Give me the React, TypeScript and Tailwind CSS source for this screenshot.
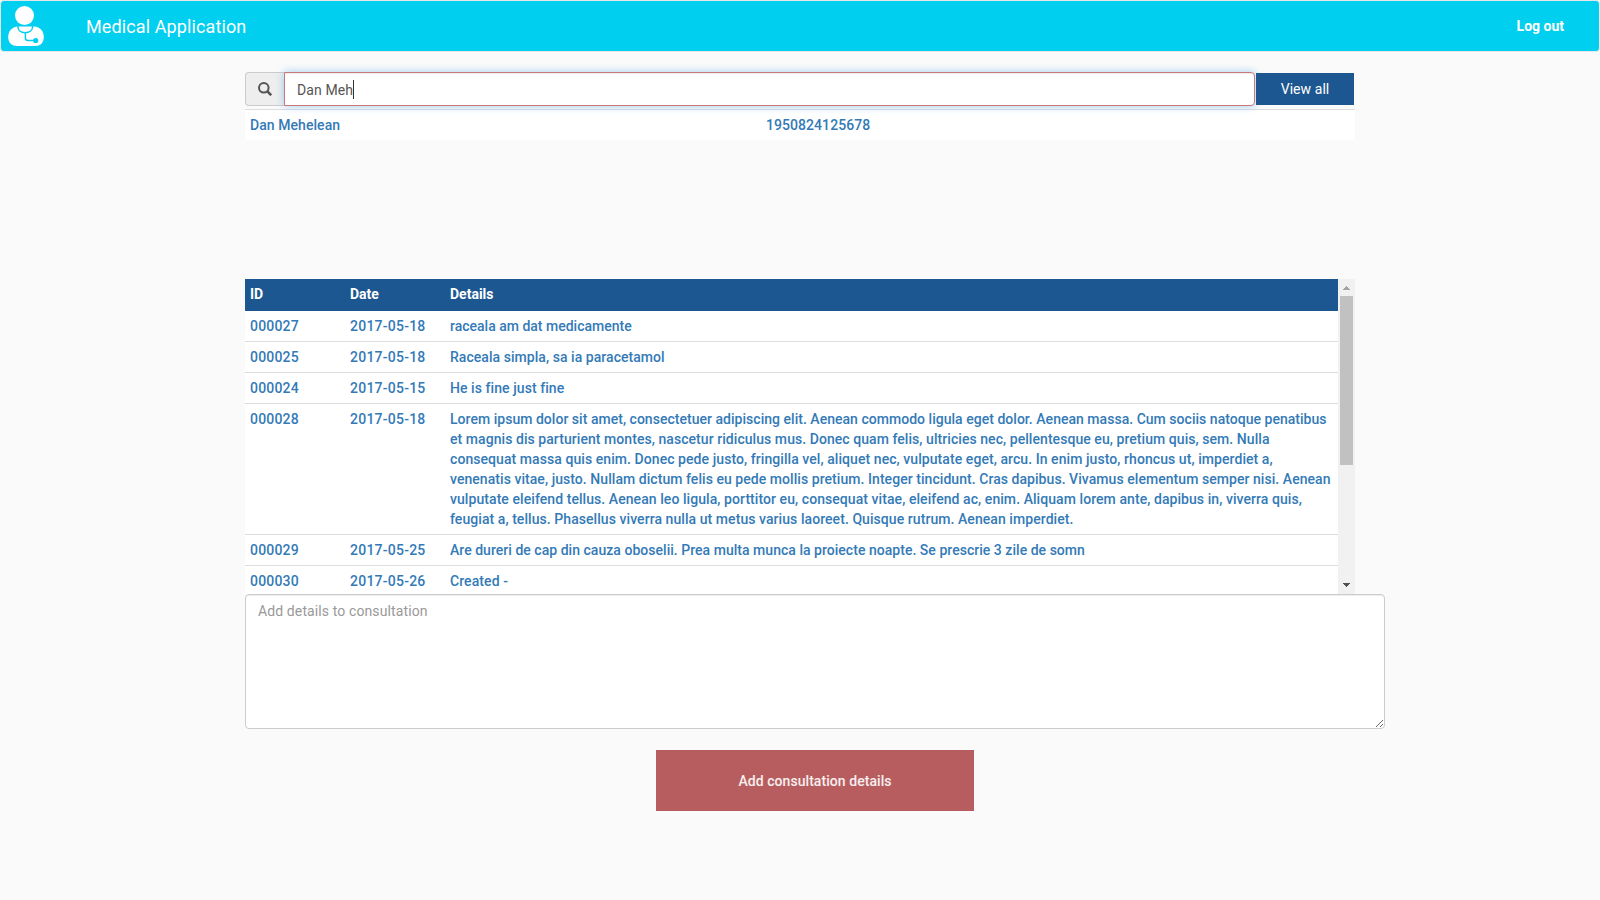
const consultations = [
  { id: "000027", date: "2017-05-18", details: [{ text: "raceala am dat medicamente", tracking: "tracking-normal" }] },
  { id: "000025", date: "2017-05-18", details: [{ text: "Raceala simpla, sa ia paracetamol", tracking: "tracking-[0.05px]" }] },
  { id: "000024", date: "2017-05-15", details: [{ text: "He is fine just fine", tracking: "tracking-[0.07px]" }] },
  {
    id: "000028",
    date: "2017-05-18",
    details: [
      { text: "Lorem ipsum dolor sit amet, consectetuer adipiscing elit. Aenean commodo ligula eget dolor. Aenean massa. Cum sociis natoque penatibus", tracking: "tracking-[0.027px]" },
      { text: "et magnis dis parturient montes, nascetur ridiculus mus. Donec quam felis, ultricies nec, pellentesque eu, pretium quis, sem. Nulla", tracking: "tracking-[0.058px]" },
      { text: "consequat massa quis enim. Donec pede justo, fringilla vel, aliquet nec, vulputate eget, arcu. In enim justo, rhoncus ut, imperdiet a,", tracking: "tracking-[0.068px]" },
      { text: "venenatis vitae, justo. Nullam dictum felis eu pede mollis pretium. Integer tincidunt. Cras dapibus. Vivamus elementum semper nisi. Aenean", tracking: "tracking-[0.053px]" },
      { text: "vulputate eleifend tellus. Aenean leo ligula, porttitor eu, consequat vitae, eleifend ac, enim. Aliquam lorem ante, dapibus in, viverra quis,", tracking: "tracking-[0.067px]" },
      { text: "feugiat a, tellus. Phasellus viverra nulla ut metus varius laoreet. Quisque rutrum. Aenean imperdiet.", tracking: "tracking-[0.065px]" },
    ],
  },
  {
    id: "000029",
    date: "2017-05-25",
    details: [{ text: "Are dureri de cap din cauza oboselii. Prea multa munca la proiecte noapte. Se prescrie 3 zile de somn", tracking: "tracking-[0.03px]" }],
  },
  { id: "000030", date: "2017-05-26", details: [{ text: "Created -", tracking: "tracking-[0.08px]" }] },
];

function DoctorIcon() {
  return (
    <svg className="ml-[7px] h-10 w-9" viewBox="0 0 36 40" fill="none">
      <circle cx="16.5" cy="9.5" r="9.5" fill="#fff" />
      <path d="M9 20.500C3.500 21.200.2 25.500.2 31 .2 37 4 40 9 40h18c5.500 0 8.800-3.300 8.800-9 0-5.500-3.300-9.800-8.800-10.500z" fill="#fff" />
      <path d="M9.800 20c0 4.200 3 6.700 7.300 6.700s7.600-2.500 7.600-6.700M17.400 26.700v5.300q0 2.500 2.600 2.500h6" stroke="#00cfef" strokeWidth="1.500" />
      <circle cx="27.700" cy="34.500" r="2.600" fill="#00cfef" />
    </svg>
  );
}

function Scrollbar() {
  return (
    <div className="flex w-[17px] shrink-0 flex-col items-center bg-[#f1f1f1]">
      <svg className="h-[17px] w-[17px] shrink-0" viewBox="0 0 17 17" shapeRendering="crispEdges">
        <path d="M8 7h1v1h1v1h1v1h1v1H5v-1h1V9h1V8h1z" fill="#a3a3a3" />
      </svg>
      <div className="h-[169px] w-[13px] bg-[#c1c1c1]" />
      <svg className="mt-auto h-[17px] w-[17px] shrink-0" viewBox="0 0 17 17" shapeRendering="crispEdges">
        <path d="M5 6h7v1h-1v1h-1v1H9v1H8V9H7V8H6V7H5z" fill="#505050" />
      </svg>
    </div>
  );
}

export default function App() {
  return (
    <div className="h-[900px] w-[1600px] overflow-hidden bg-[#fafafa] font-['Roboto',sans-serif] text-sm leading-5 text-[#333]">
      <nav className="flex h-[52px] items-center rounded border border-[#e7e7e7] bg-[#00cfef] text-white">
        <DoctorIcon />
        <span className="ml-[42px] pt-px text-lg tracking-[0.11px]">Medical Application</span>
        <a className="mr-[35px] ml-auto font-bold">Log out</a>
      </nav>

      <main className="ml-[245px] w-[1140px] pt-5">
        <div className="flex h-[34px] w-[1110px] items-center">
          <div className="flex h-[34px] w-[39px] items-center justify-center rounded-l border border-r-0 border-[#ccc] bg-[#eee]">
            <svg className="h-[14px] w-[14px]" viewBox="0 0 14 14" fill="none" stroke="#555" strokeWidth="2">
              <circle cx="5.800" cy="5.800" r="4.800" />
              <path d="M9.200 9.200l4 4" strokeWidth="2.600" />
            </svg>
          </div>
          <div className="flex h-[34px] w-[971px] items-center rounded-r border border-[#c9787b] bg-white px-3 text-[#555] shadow-[inset_0_1px_1px_rgba(0,0,0,0.075),0_0_8px_rgba(102,175,233,0.6)]">
            <span className="pt-0.5 tracking-[0.11px]">Dan Meh</span>
            <span className="h-[19px] w-px bg-[#333]" />
          </div>
          <button className="ml-px h-8 w-[98px] bg-[#1c5791] tracking-[0.06px] text-white">View all</button>
        </div>

        <div className="mt-[3px] flex h-[31px] w-[1110px] items-center border-t border-[#ddd] bg-white px-[5px] font-medium tracking-[0.06px] text-[#337ab7]">
          <span className="w-[516px]">Dan Mehelean</span>
          <span>1950824125678</span>
        </div>

        <section className="mt-[139px] flex h-[315px] w-[1110px] overflow-hidden">
          <div className="w-[1093px] bg-white">
            <div className="grid h-8 grid-cols-[100px_100px_1fr] bg-[#1c5791] px-[5px] pt-[5px] font-bold text-white">
              <span>ID</span>
              <span>Date</span>
              <span>Details</span>
            </div>
            <div className="divide-y divide-[#ddd] font-medium text-[#337ab7]">
              {consultations.map((item) => (
                <div key={item.id} className="grid grid-cols-[100px_100px_1fr] px-[5px] py-[5px]">
                  <span className="tracking-[0.17px]">{item.id}</span>
                  <span className="tracking-[0.24px]">{item.date}</span>
                  <div className="whitespace-nowrap">
                    {item.details.map((line) => (
                      <p key={line.text} className={line.tracking}>{line.text}</p>
                    ))}
                  </div>
                </div>
              ))}
            </div>
          </div>
          <Scrollbar />
        </section>

        <textarea
          placeholder="Add details to consultation"
          className="block h-[135px] w-[1140px] resize rounded border border-[#ccc] bg-white px-3 py-1.5 tracking-[0.11px] shadow-[inset_0_1px_1px_rgba(0,0,0,0.075)] placeholder:text-[#999]"
        />
        <button className="mt-[21px] ml-[411px] block h-[61px] w-[318px] bg-[#b75d60] font-medium tracking-[0.06px] text-white/90">
          Add consultation details
        </button>
      </main>
    </div>
  );
}
